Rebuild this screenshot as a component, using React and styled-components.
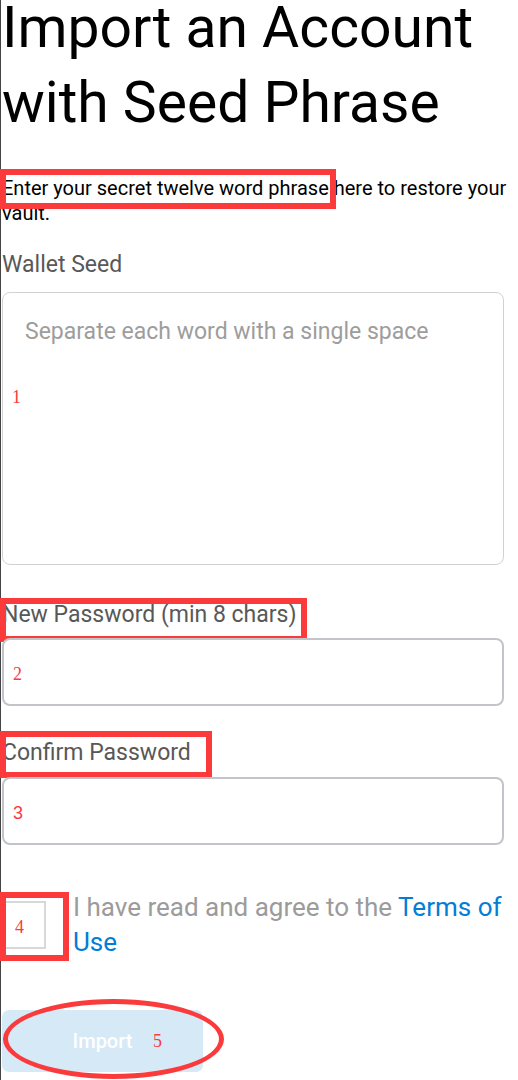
import React from 'react';
import styled, { createGlobalStyle } from 'styled-components';

const GlobalStyle = createGlobalStyle`
  html, body {
    margin: 0;
    padding: 0;
    background: #ffffff;
    overflow: hidden;
  }
  body {
    font-family: Roboto, 'Liberation Sans', sans-serif;
  }
`;

const Page = styled.div`
  display: flex;
  flex-direction: column;
  align-items: flex-start;
  min-height: 1080px;
  border-left: 1px solid #444;
  padding-left: 1px;
  box-sizing: border-box;
`;

const Title = styled.h1`
  margin: -10px 0 0 0;
  font-family: Roboto, sans-serif;
  font-weight: 400;
  font-size: 57px;
  line-height: 75px;
  color: #000;
`;

const Intro = styled.p`
  margin: 36px 0 0 0;
  width: 512px;
  font-family: Roboto, sans-serif;
  font-size: 20px;
  line-height: 25px;
  color: #000;
`;

const Marked = styled.span`
  position: relative;
`;

// red annotation frame drawn over the screenshot
const Frame = styled.span`
  position: absolute;
  top: ${p => p.$t}px;
  left: ${p => p.$l}px;
  right: ${p => p.$r}px;
  bottom: ${p => p.$b}px;
  border: 6px solid #fb3a3c;
  pointer-events: none;
`;

const Ring = styled.span`
  position: absolute;
  top: -11px;
  left: 1px;
  right: -21px;
  bottom: -7px;
  border: 5px solid #fb3a3c;
  border-radius: 50%;
  pointer-events: none;
`;

const Num = styled.span`
  position: absolute;
  left: ${p => p.$x}px;
  top: ${p => p.$y}px;
  font-family: ${p => (p.$sans ? "'Liberation Sans', sans-serif" : "'Liberation Serif', serif")};
  font-weight: 400;
  font-size: 18px;
  line-height: 18px;
  color: #fb3a3c;
`;

const Label = styled.label`
  position: relative;
  display: inline-block;
  margin-top: ${p => p.$mt}px;
  font-family: Roboto, sans-serif;
  font-size: 23px;
  line-height: 27px;
  color: #585858;
`;

const FieldBox = styled.div`
  position: relative;
  width: 502px;
  margin-top: ${p => p.$mt}px;
`;

const SeedArea = styled.textarea`
  display: block;
  width: 100%;
  height: 273px;
  box-sizing: border-box;
  border: 1.5px solid #d2d2d2;
  border-radius: 8px;
  padding: 25px 22px;
  resize: none;
  font-family: Roboto, sans-serif;
  font-size: 23px;
  line-height: 27px;
  color: #333;
  outline: none;

  &::placeholder {
    color: #9d9d9d;
  }
`;

const PassInput = styled.input`
  display: block;
  width: 100%;
  height: 68px;
  box-sizing: border-box;
  border: 2px solid #c1c5c9;
  border-radius: 8px;
  padding: 0 14px;
  font-family: Roboto, sans-serif;
  font-size: 20px;
  outline: none;
`;

const TermsRow = styled.div`
  display: flex;
  align-items: flex-start;
  gap: 27px;
  margin-top: 45px;
  width: 502px;
`;

const CheckWrap = styled.div`
  position: relative;
  flex: none;
  margin-top: 11px;
`;

const Check = styled.div`
  width: 44px;
  height: 48px;
  box-sizing: border-box;
  border: 2px solid #d8d8d8;
  background: #fff;
`;

const TermsText = styled.div`
  font-family: Roboto, sans-serif;
  font-size: 26px;
  line-height: 35px;
  color: #9b9b9b;
`;

const TermsLink = styled.span`
  color: #037dd6;
`;

const ImportButton = styled.button`
  position: relative;
  margin-top: 50px;
  width: 201px;
  height: 62px;
  border: none;
  border-radius: 7px;
  background: #d6e9f7;
  color: #ffffff;
  font-family: Roboto, sans-serif;
  font-weight: 500;
  font-size: 20px;
  cursor: default;
`;

export default function App() {
  return (
    <>
      <GlobalStyle />
      <Page>
        <Title>
          Import an Account
          <br />
          with Seed Phrase
        </Title>

        <Intro>
          <Marked>
            Enter your secret twelve word phrase
            <Frame $t={-7} $l={-2} $r={-7} $b={-9} />
          </Marked>{' '}
          here to restore your vault.
        </Intro>

        <Label $mt={25}>Wallet Seed</Label>
        <FieldBox $mt={14}>
          <SeedArea placeholder="Separate each word with a single space" />
          <Num $x={10} $y={96}>1</Num>
        </FieldBox>

        <Label $mt={36}>
          New Password (min 8 chars)
          <Frame $t={-3} $l={-2} $r={-11} $b={-14} />
        </Label>
        <FieldBox $mt={10}>
          <PassInput type="password" />
          <Num $x={11} $y={27}>2</Num>
        </FieldBox>

        <Label $mt={33}>
          Confirm Password
          <Frame $t={-8} $l={-2} $r={-21} $b={-12} />
        </Label>
        <FieldBox $mt={11}>
          <PassInput type="password" />
          <Num $x={11} $y={27} $sans>3</Num>
        </FieldBox>

        <TermsRow>
          <CheckWrap>
            <Check />
            <Frame $t={-9} $l={-2} $r={-23} $b={-12} />
            <Num $x={13} $y={17}>4</Num>
          </CheckWrap>
          <TermsText>
            I have read and agree to the <TermsLink>Terms of Use</TermsLink>
          </TermsText>
        </TermsRow>

        <ImportButton>
          Import
          <Num $x={151} $y={22}>5</Num>
          <Ring />
        </ImportButton>
      </Page>
    </>
  );
}
